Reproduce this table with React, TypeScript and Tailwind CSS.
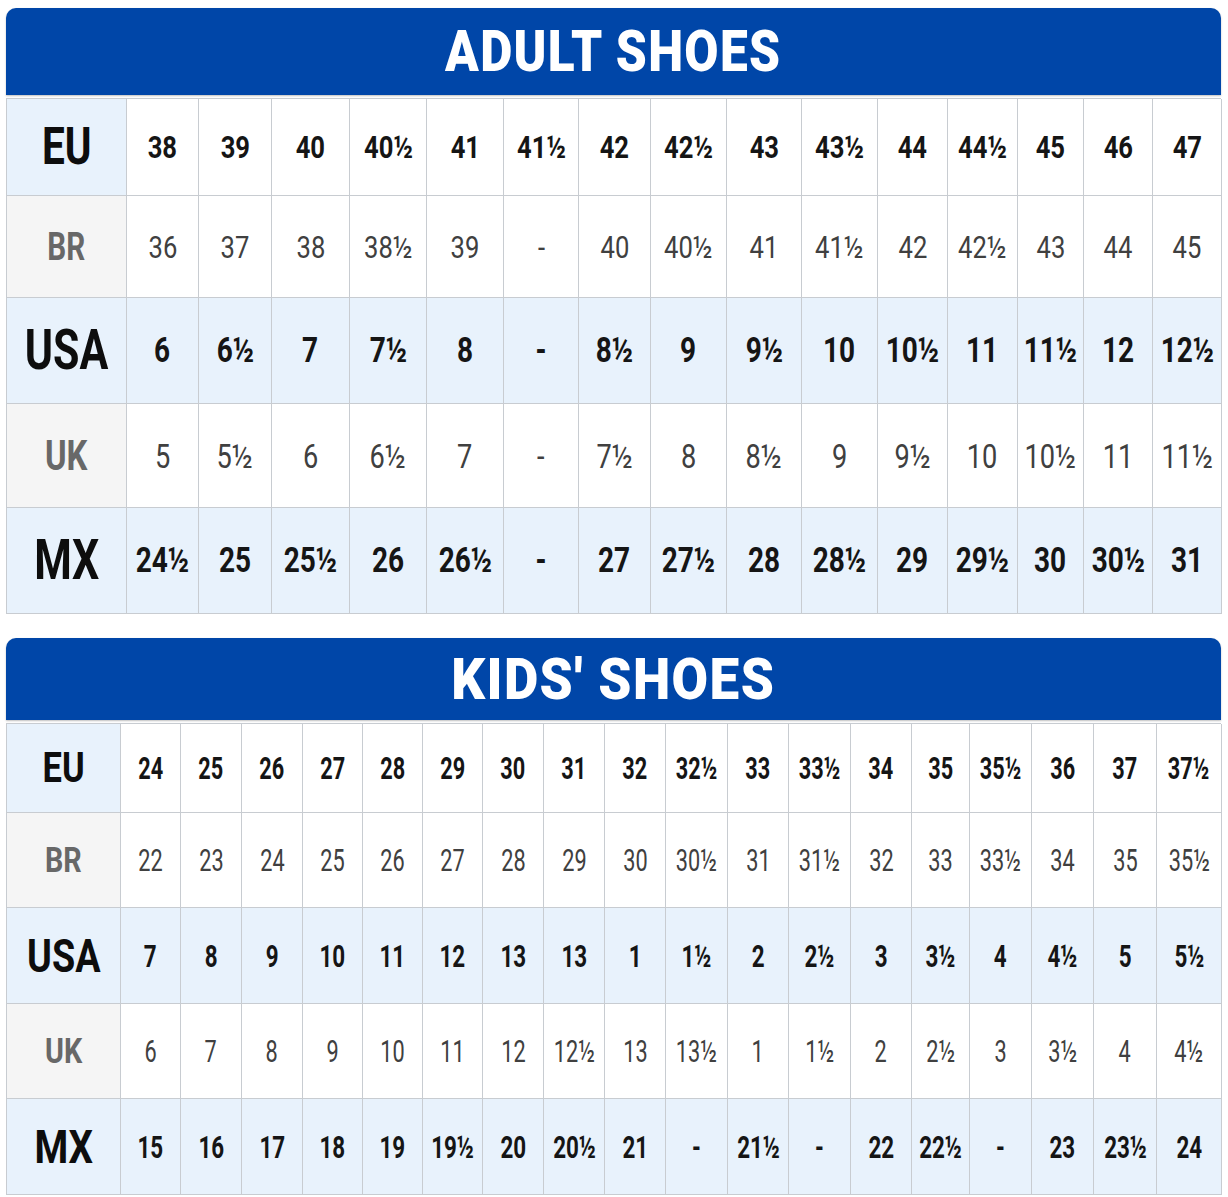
const adult = {
  title: 'ADULT SHOES',
  rows: [
    { label: 'EU', values: ['38', '39', '40', '40½', '41', '41½', '42', '42½', '43', '43½', '44', '44½', '45', '46', '47'] },
    { label: 'BR', values: ['36', '37', '38', '38½', '39', '-', '40', '40½', '41', '41½', '42', '42½', '43', '44', '45'] },
    { label: 'USA', values: ['6', '6½', '7', '7½', '8', '-', '8½', '9', '9½', '10', '10½', '11', '11½', '12', '12½'] },
    { label: 'UK', values: ['5', '5½', '6', '6½', '7', '-', '7½', '8', '8½', '9', '9½', '10', '10½', '11', '11½'] },
    { label: 'MX', values: ['24½', '25', '25½', '26', '26½', '-', '27', '27½', '28', '28½', '29', '29½', '30', '30½', '31'] },
  ],
};

const kids = {
  title: "KIDS' SHOES",
  rows: [
    { label: 'EU', values: ['24', '25', '26', '27', '28', '29', '30', '31', '32', '32½', '33', '33½', '34', '35', '35½', '36', '37', '37½'] },
    { label: 'BR', values: ['22', '23', '24', '25', '26', '27', '28', '29', '30', '30½', '31', '31½', '32', '33', '33½', '34', '35', '35½'] },
    { label: 'USA', values: ['7', '8', '9', '10', '11', '12', '13', '13', '1', '1½', '2', '2½', '3', '3½', '4', '4½', '5', '5½'] },
    { label: 'UK', values: ['6', '7', '8', '9', '10', '11', '12', '12½', '13', '13½', '1', '1½', '2', '2½', '3', '3½', '4', '4½'] },
    { label: 'MX', values: ['15', '16', '17', '18', '19', '19½', '20', '20½', '21', '-', '21½', '-', '22', '22½', '-', '23', '23½', '24'] },
  ],
};

// row styles: EU / BR / USA / UK / MX
const adultStyle = [
  { h: 'h-[97px]', label: 'bg-[#e8f2fc] text-[52px] text-[#0d0d0d]', cell: 'bg-white text-[32px] font-bold text-[#151515]' },
  { h: 'h-[102px]', label: 'bg-[#f5f5f5] text-[38px] text-[#686868]', cell: 'bg-white text-[32px] font-normal text-[#404040]' },
  { h: 'h-[106px]', label: 'bg-[#e8f2fc] text-[55px] text-[#0d0d0d]', cell: 'bg-[#e8f2fc] text-[35px] font-bold text-[#151515]' },
  { h: 'h-[104px]', label: 'bg-[#f5f5f5] text-[42px] text-[#686868]', cell: 'bg-white text-[34px] font-normal text-[#404040]' },
  { h: 'h-[106px]', label: 'bg-[#e8f2fc] text-[55px] text-[#0d0d0d]', cell: 'bg-[#e8f2fc] text-[35px] font-bold text-[#151515]' },
];

const kidsStyle = [
  { h: 'h-[89px]', label: 'bg-[#e8f2fc] text-[42px] text-[#0d0d0d]', cell: 'bg-white text-[31px] font-bold text-[#151515]' },
  { h: 'h-[95px]', label: 'bg-[#f5f5f5] text-[35px] text-[#686868]', cell: 'bg-white text-[31px] font-normal text-[#404040]' },
  { h: 'h-[96px]', label: 'bg-[#e8f2fc] text-[46px] text-[#0d0d0d]', cell: 'bg-[#e8f2fc] text-[32px] font-bold text-[#151515]' },
  { h: 'h-[95px]', label: 'bg-[#f5f5f5] text-[35px] text-[#686868]', cell: 'bg-white text-[31px] font-normal text-[#404040]' },
  { h: 'h-[96px]', label: 'bg-[#e8f2fc] text-[47px] text-[#0d0d0d]', cell: 'bg-[#e8f2fc] text-[32px] font-bold text-[#151515]' },
];

type Table = typeof adult;

function SizeChart({
  data,
  cols,
  styles,
  headerH,
  titleScale,
  labelScale,
  cellScale,
}: {
  data: Table;
  cols: string;
  styles: typeof adultStyle;
  headerH: string;
  titleScale: string;
  labelScale: string;
  cellScale: string;
}) {
  return (
    <section className="font-['Roboto','Liberation_Sans',sans-serif]">
      <header
        className={`${headerH} rounded-t-[10px] bg-[#0046a8] flex items-center justify-center shadow-[0_1px_2px_rgba(0,0,0,0.25)]`}
      >
        <h2
          className={`inline-block ${titleScale} text-[57px] font-black tracking-[1.5px] text-white leading-none whitespace-nowrap`}
        >
          {data.title}
        </h2>
      </header>
      <div className={`mt-[3px] grid ${cols} border-t border-l border-[#c8ccd1]`}>
        {data.rows.map((row, i) => (
          <div key={row.label} className="contents">
            <div
              className={`${styles[i].h} ${styles[i].label} flex items-center justify-center font-bold border-r border-b border-[#c8ccd1] leading-none`}
            >
              <span className={`inline-block whitespace-nowrap ${labelScale}`}>{row.label}</span>
            </div>
            {row.values.map((v, j) => (
              <div
                key={j}
                className={`${styles[i].h} ${styles[i].cell} flex items-center justify-center border-r border-b border-[#c8ccd1] leading-none`}
              >
                <span className={`inline-block whitespace-nowrap ${cellScale}`}>{v}</span>
              </div>
            ))}
          </div>
        ))}
      </div>
    </section>
  );
}

export default function App() {
  return (
    <div className="w-[1228px] bg-white pt-[8px] pl-[6px] pr-[7px] pb-[2px]">
      <SizeChart
        data={adult}
        cols="grid-cols-[120px_72px_73px_78px_77px_77px_75px_72px_76px_75px_76px_70px_70px_66px_69px_69px]"
        styles={adultStyle}
        headerH="h-[87px]"
        titleScale="scale-x-[0.87]"
        labelScale="scale-x-[0.78]"
        cellScale="scale-x-[0.8]"
      />
      <div className="h-[24px]" />
      <SizeChart
        data={kids}
        cols="grid-cols-[114px_60px_61px_61px_60px_60px_60px_61px_61px_61px_62px_61px_62px_61px_58px_62px_62px_63px_65px]"
        styles={kidsStyle}
        headerH="h-[82px]"
        titleScale="scale-x-[0.93]"
        labelScale="scale-x-[0.82]"
        cellScale="scale-x-[0.7]"
      />
    </div>
  );
}
